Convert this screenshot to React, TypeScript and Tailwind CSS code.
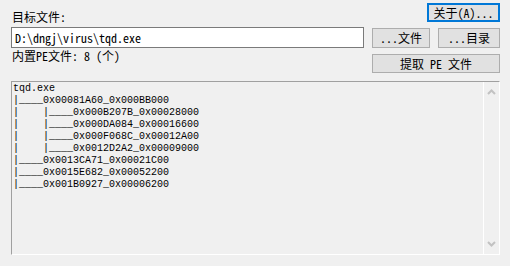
import React from 'react'

const mono = "font-['Noto_Sans_Mono_CJK_SC','Noto_Sans_CJK_SC','Liberation_Mono',monospace]"

const tree = [
  'tqd.exe',
  '|____0x00081A60_0x000BB000',
  '|    |____0x000B207B_0x00028000',
  '|    |____0x000DA084_0x00016600',
  '|    |____0x000F068C_0x00012A00',
  '|    |____0x0012D2A2_0x00009000',
  '|____0x0013CA71_0x00021C00',
  '|____0x0015E682_0x00052200',
  '|____0x001B0927_0x00006200',
]

function Btn({ children, className = '', focused = false }: { children: React.ReactNode; className?: string; focused?: boolean }) {
  return (
    <button
      className={`flex items-center justify-center bg-[#e1e1e1] text-[12px] leading-none text-black ${mono} ${
        focused ? 'border-2 border-[#0078d7]' : 'border border-[#adadad]'
      } ${className}`}
    >
      {children}
    </button>
  )
}

export default function App() {
  return (
    <div className={`w-[510px] h-[266px] bg-[#f0f0f0] pt-[3px] pl-[11px] pr-[10px] flex flex-col text-black ${mono}`}>
      <div className="flex items-start justify-between">
        <span className="mt-[7px] pl-px text-[12px] leading-[14px]">目标文件:</span>
        <Btn focused className="w-[73px] h-[19px]">关于(A)...</Btn>
      </div>

      <div className="mt-[3px] flex items-start">
        <div className="w-[353px] h-[21px] bg-white border border-[#7a7a7a] flex items-center pl-[3px] text-[12px] leading-none">
          D:\dngj\virus\tqd.exe
        </div>
        <Btn className="ml-[8px] mt-px w-[58px] h-[20px]">...文件</Btn>
        <Btn className="ml-[8px] mt-px w-[62px] h-[20px]">...目录</Btn>
      </div>

      <div className="flex items-start justify-between">
        <span className="mt-px pl-px text-[12px] leading-[14px] whitespace-pre">内置PE文件: 8 (个)</span>
        <Btn className="mt-[6px] w-[128px] h-[19px] whitespace-pre">提取 PE 文件</Btn>
      </div>

      <div className="mt-[8px] h-[174px] flex border-t border-l border-[#a0a0a0] border-r-white border-b-white border-r border-b">
        <div className="flex-1 pl-px pt-px font-['Liberation_Mono',monospace] text-[10px] leading-[12px] whitespace-pre">
          {tree.map((line, i) => (
            <div key={i}>{line}</div>
          ))}
        </div>
        <div className="w-[16px] border-l border-white flex flex-col items-center justify-between py-[7px]">
          <svg width="9" height="6" viewBox="0 0 9 6">
            <polyline points="1,5 4.5,1.5 8,5" fill="none" stroke="#c2c2c2" strokeWidth="2" />
          </svg>
          <svg width="9" height="6" viewBox="0 0 9 6">
            <polyline points="1,1 4.5,4.5 8,1" fill="none" stroke="#c2c2c2" strokeWidth="2" />
          </svg>
        </div>
      </div>
    </div>
  )
}
